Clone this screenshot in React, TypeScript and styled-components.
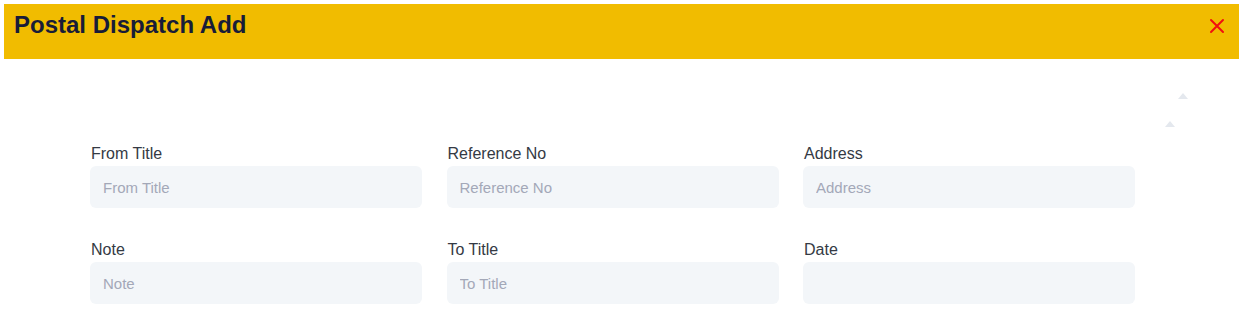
import React from "react";
import styled, { createGlobalStyle } from "styled-components";

const Global = createGlobalStyle`
  html, body { margin: 0; padding: 0; background: #ffffff; }
  body { margin: 4px; font-family: "Liberation Sans", Arial, sans-serif; }
  * { box-sizing: border-box; }
`;

const Page = styled.div`
  position: relative;
  width: 1235px;
`;

const Header = styled.div`
  height: 55px;
  background: #f1bc00;
  display: flex;
  align-items: flex-start;
  justify-content: space-between;
  padding: 7px 14px 0 10px;
`;

const Title = styled.h1`
  margin: 0;
  font-size: 24px;
  font-weight: 700;
  color: #181c38;
  line-height: 28px;
`;

const Close = styled.button`
  border: none;
  background: transparent;
  padding: 0;
  margin-top: 7px;
  width: 16px;
  height: 16px;
  display: flex;
  cursor: pointer;
`;

const Body = styled.div`
  padding: 86px 100px 0 86px;
`;

const Grid = styled.div`
  display: grid;
  grid-template-columns: repeat(3, 332px);
  column-gap: 24.5px;
  row-gap: 33px;
`;

const Field = styled.div`
  display: flex;
  flex-direction: column;
`;

const Label = styled.label`
  font-size: 16px;
  line-height: 18px;
  color: #343a44;
  margin-bottom: 3px;
  padding-left: 1px;
`;

const Input = styled.input`
  height: 42px;
  border: none;
  outline: none;
  border-radius: 6px;
  background: #f3f6f9;
  padding: 0 13px;
  font-family: "Liberation Sans", Arial, sans-serif;
  font-size: 15px;
  color: #30363f;
  &::placeholder { color: #a3a8b8; }
`;

const Arrow = styled.div<{ $x: number; $y: number }>`
  position: absolute;
  left: ${(p) => p.$x}px;
  top: ${(p) => p.$y}px;
  width: 0;
  height: 0;
  border-left: 5px solid transparent;
  border-right: 5px solid transparent;
  border-bottom: 6px solid #e4e8ee;
`;

const fields = [
  { label: "From Title", ph: "From Title" },
  { label: "Reference No", ph: "Reference No" },
  { label: "Address", ph: "Address" },
  { label: "Note", ph: "Note" },
  { label: "To Title", ph: "To Title" },
  { label: "Date", ph: "" },
];

export default function App() {
  return (
    <Page>
      <Global />
      <Header>
        <Title>Postal Dispatch Add</Title>
        <Close aria-label="close">
          <svg width="16" height="16" viewBox="0 0 16 16">
            <path d="M2 2 L14 14 M14 2 L2 14" stroke="#f20f0f" strokeWidth="2" strokeLinecap="round" />
          </svg>
        </Close>
      </Header>
      <Arrow $x={1174} $y={89} />
      <Arrow $x={1161} $y={117} />
      <Body>
        <Grid>
          {fields.map((f) => (
            <Field key={f.label}>
              <Label>{f.label}</Label>
              <Input placeholder={f.ph} />
            </Field>
          ))}
        </Grid>
      </Body>
    </Page>
  );
}
